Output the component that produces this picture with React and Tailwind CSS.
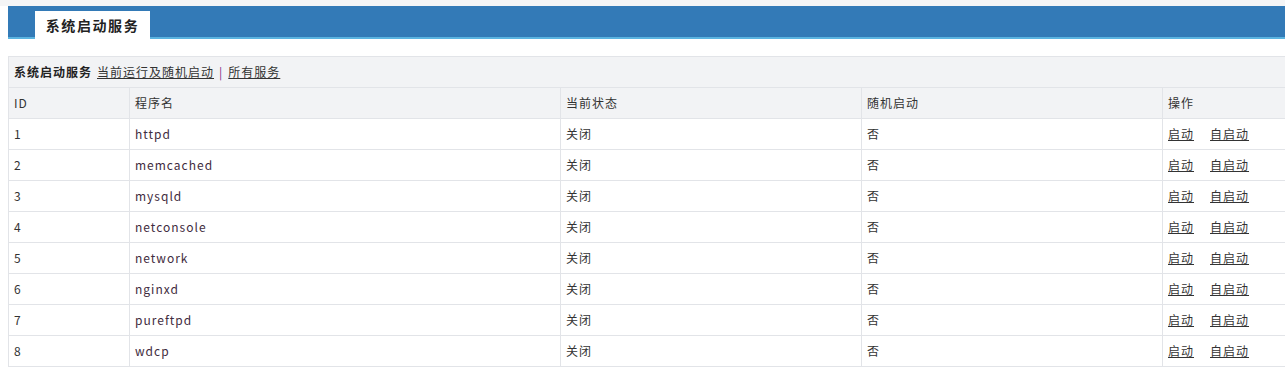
import React from 'react';

const services = ['httpd', 'memcached', 'mysqld', 'netconsole', 'network', 'nginxd', 'pureftpd', 'wdcp'];

const font = { fontFamily: '"Noto Sans CJK SC", "Noto Sans", sans-serif' };

export default function App() {
    return (
        <div className="min-h-screen bg-white text-[12px] text-[#333] tracking-[1px]" style={font}>
            <div className="h-[6px] bg-[#f4f5f6]" />

            {/* header bar */}
            <div className="ml-2 h-[33px] bg-[#337ab7] border-b-2 border-[#5bb4e0] flex items-end">
                <div className="ml-[27px] -mb-[2px] h-[28px] w-[115px] bg-white flex items-center justify-center text-[14px] font-bold text-[#222] tracking-[1.6px]">
                    系统启动服务
                </div>
            </div>

            <div className="mt-[17px] ml-2 w-[1290px]">
                <table className="w-full border-collapse table-fixed">
                    <colgroup>
                        <col className="w-[121px]" />
                        <col className="w-[431px]" />
                        <col className="w-[301px]" />
                        <col className="w-[301px]" />
                        <col />
                    </colgroup>
                    <thead>
                        <tr className="h-[31px] bg-[#f2f3f5]">
                            <td colSpan={5} className="border border-[#e2e4e8] px-[5px]">
                                <span className="font-bold text-[#222]">系统启动服务</span>
                                <a href="#" className="ml-[5px] underline text-[#333]">当前运行及随机启动</a>
                                <span className="mx-[5px] text-[#7a2c86]">|</span>
                                <a href="#" className="underline text-[#333]">所有服务</a>
                            </td>
                        </tr>
                        <tr className="h-[31px] bg-[#f2f3f5] text-left">
                            <th className="border border-[#e2e4e8] px-[5px] font-normal">ID</th>
                            <th className="border border-[#e2e4e8] px-[5px] font-normal">程序名</th>
                            <th className="border border-[#e2e4e8] px-[5px] font-normal">当前状态</th>
                            <th className="border border-[#e2e4e8] px-[5px] font-normal">随机启动</th>
                            <th className="border border-[#e2e4e8] px-[5px] font-normal">操作</th>
                        </tr>
                    </thead>
                    <tbody>
                        {services.map((name, i) => (
                            <tr key={name} className="h-[31px]">
                                <td className="border border-[#e2e4e8] px-[5px]">{i + 1}</td>
                                <td className="border border-[#e2e4e8] px-[5px] text-[#3f2c40]">{name}</td>
                                <td className="border border-[#e2e4e8] px-[5px]">关闭</td>
                                <td className="border border-[#e2e4e8] px-[5px]">否</td>
                                <td className="border border-[#e2e4e8] px-[5px]">
                                    <a href="#" className="underline text-[#333]">启动</a>
                                    <a href="#" className="ml-[16px] underline text-[#333]">自启动</a>
                                </td>
                            </tr>
                        ))}
                    </tbody>
                </table>
            </div>
        </div>
    );
}
